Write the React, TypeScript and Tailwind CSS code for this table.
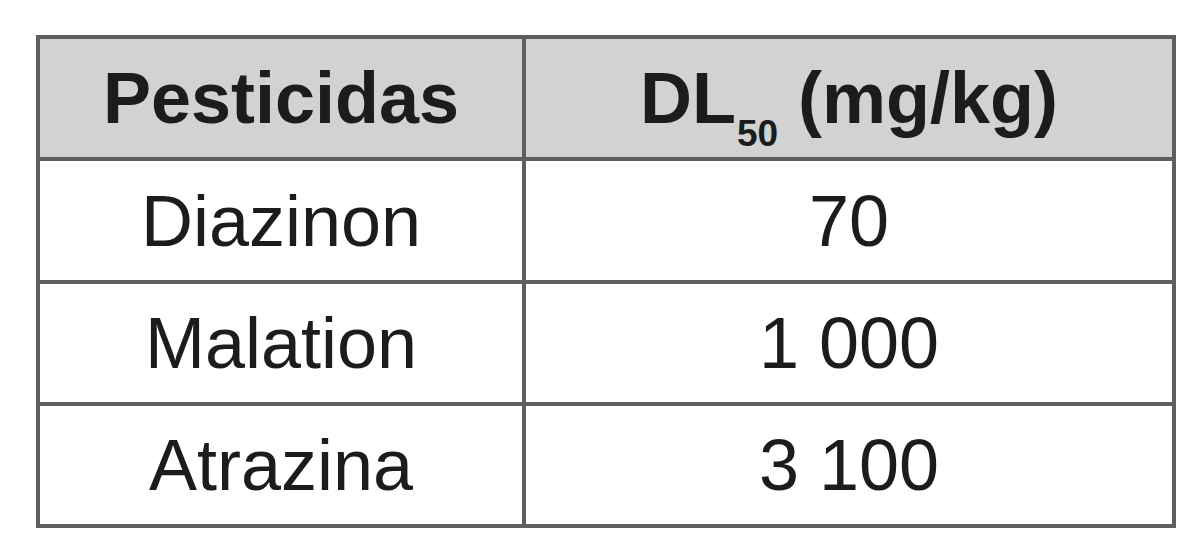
import React from "react";

const rows: [string, string][] = [
  ["Diazinon", "70"],
  ["Malation", "1 000"],
  ["Atrazina", "3 100"],
];

export default function App() {
  return (
    <div
      className="w-[1200px] h-[554px] bg-white pl-[36px] pt-[35px] text-[#1c1c1c]"
      style={{ fontFamily: '"Liberation Sans", Arial, sans-serif' }}
    >
      <div className="w-[1140px] border-4 border-[#5e5e5e] flex flex-col">
        <div className="flex h-[118px] bg-[#d2d2d2]">
          <div className="w-[486px] border-r-4 border-[#5e5e5e] flex items-center justify-center text-[72px] font-bold leading-none">
            Pesticidas
          </div>
          <div className="flex-1 flex items-center justify-center text-[72px] font-bold leading-none">
            <span>DL</span>
            <span className="text-[37px] relative top-[35px] ml-[1px]">50</span>
            <span className="ml-[20px]">(mg/kg)</span>
          </div>
        </div>
        {rows.map(([a, b], i) => (
          <div
            key={a}
            className={`flex border-t-4 border-[#5e5e5e] ${i === 0 ? "h-[123px]" : "h-[122px]"}`}
          >
            <div className="w-[486px] border-r-4 border-[#5e5e5e] flex items-center justify-center text-[72px] leading-none">
              {a}
            </div>
            <div className="flex-1 flex items-center justify-center text-[72px] leading-none">
              {b}
            </div>
          </div>
        ))}
      </div>
    </div>
  );
}
